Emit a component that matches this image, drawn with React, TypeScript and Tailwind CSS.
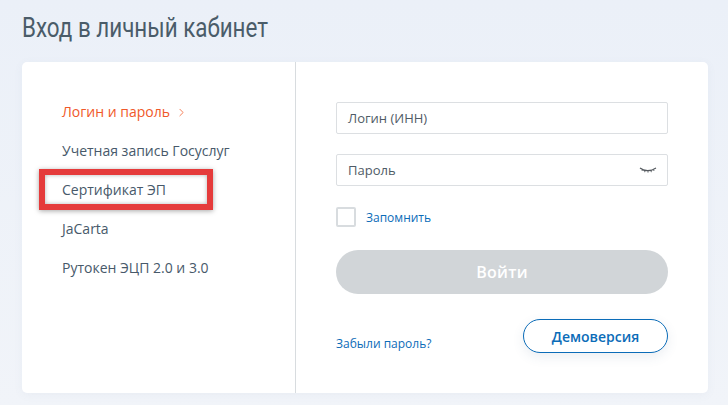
import { ChevronRight } from "lucide-react";

const methods = ["Учетная запись Госуслуг", "Сертификат ЭП", "JaCarta", "Рутокен ЭЦП 2.0 и 3.0"];

export default function App() {
    return (
        <div className="w-[728px] h-[405px] overflow-hidden bg-gradient-to-b from-[#ebf0f8] to-[#f1f4f9] px-[22px] pt-[12px] font-['Open_Sans','Noto_Sans',sans-serif]">
            <h1 className="h-[50px] font-['Roboto',sans-serif] text-[28px] leading-[32px] text-[#4a5c69] origin-left scale-x-[0.8] whitespace-nowrap">
                Вход в личный кабинет
            </h1>
            <div className="relative flex h-[331px] w-[686px] rounded-[5px] bg-white shadow-[0_2px_10px_rgba(100,120,150,0.06)]">
                <div className="w-[274px] shrink-0 border-r border-[#d8dcdf] pl-[40px] pt-[39px] text-[14px] text-[#47596a]">
                    <div className="flex h-[21px] items-center text-[#f0592a]">
                        Логин и пароль
                        <ChevronRight className="ml-[5px] mt-[2px] h-[13px] w-[13px] text-[#f47a50]" strokeWidth={1.75} />
                    </div>
                    <ul className="mt-[18px] flex flex-col gap-[18px]">
                        {methods.map((m) => (
                            <li key={m} className="h-[21px] leading-[21px] whitespace-nowrap">{m}</li>
                        ))}
                    </ul>
                </div>
                <div className="w-[372px] pl-[40px] pt-[40px]">
                    <div className="flex h-[32px] w-[332px] items-center rounded-[2px] border border-[#dcdfe2] px-[11px] pt-[1px] text-[13px] text-[#4f5b66]">
                        Логин (ИНН)
                    </div>
                    <div className="mt-[20px] flex h-[32px] w-[332px] items-center justify-between rounded-[2px] border border-[#dcdfe2] pl-[11px] pr-[10px] pt-[1px] text-[13px] text-[#4f5b66]">
                        Пароль
                        <svg width="18" height="7" viewBox="0 0 18 7" fill="none" stroke="#555a5f" strokeWidth="1.1">
                            <path d="M1 1 C5 4.5 12 4.5 17 1" />
                            <path d="M3.5 2.5 L3 4 M6 3.5 L5.7 5.2 M9 3.8 L9 5.6 M12 3.5 L12.3 5.2 M14.5 2.5 L15 4" strokeWidth="0.9" />
                        </svg>
                    </div>
                    <label className="mt-[21px] flex h-[20px] items-center">
                        <span className="h-[20px] w-[20px] rounded-[2px] border-2 border-[#d8dcdf] bg-white" />
                        <span className="ml-[10px] mt-[2px] text-[12px] text-[#0b6cb8]">Запомнить</span>
                    </label>
                    <button className="mt-[23px] h-[44px] w-[332px] rounded-[22px] bg-[#d1d5d8] text-[16px] font-semibold text-white tracking-[0.3px]">
                        Войти
                    </button>
                    <div className="mt-[25px] flex items-start justify-between">
                        <a className="mt-[16px] text-[12px] text-[#0b6cb8]">Забыли пароль?</a>
                        <button className="h-[34px] w-[145px] rounded-[17px] border border-[#0b6cb8] bg-white text-[14px] font-semibold text-[#0b6cb8] shadow-[0_4px_12px_rgba(60,90,130,0.1)]">
                            Демоверсия
                        </button>
                    </div>
                </div>
                <div className="absolute left-[17px] top-[107px] h-[41px] w-[174px] border-[6px] border-[#e53b3b] shadow-[0_1px_5px_rgba(0,0,0,0.35),inset_0_0_4px_rgba(0,0,0,0.3)]" />
            </div>
        </div>
    );
}
